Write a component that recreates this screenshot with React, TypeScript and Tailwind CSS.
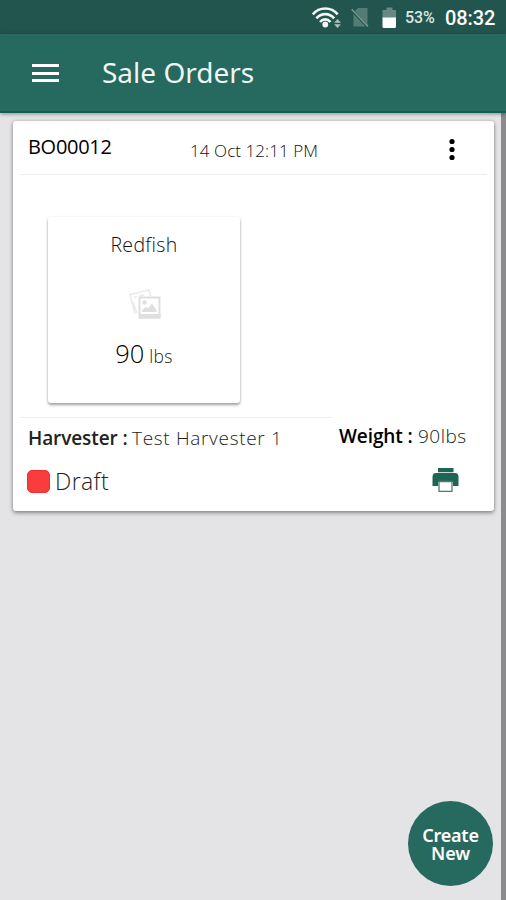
import React from "react";

function StatusBar() {
  return (
    <div className="flex h-[34px] items-center bg-[#22554e] pl-[311px] pt-px font-['Roboto',sans-serif] text-white">
      <svg className="h-6 w-[30px] shrink-0" viewBox="0 0 30 24" fill="none" stroke="#f1f7f5" strokeWidth="2.600">
        <path d="M1.800 8.300C8.500 .5 20 .5 26.700 8.300" />
        <path d="M5.400 12.300C10 6.700 18.500 6.700 23.100 12.300" />
        <path d="M9 16C12 12.500 16.500 12.500 19.500 16" />
        <circle cx="14.300" cy="18.500" r="2.900" fill="#f1f7f5" stroke="none" />
        <path d="M24.500 16.200l2-2.200 2 2.200zM24.500 18.800h4l-2 2.300z" fill="#a9c0bb" stroke="#a9c0bb" strokeWidth="1.300" />
      </svg>
      <svg className="ml-[10px] h-6 w-[18px] shrink-0" viewBox="0 0 18 24">
        <path d="M7 2h9.500v17L4 5zM2.500 8l12 12.500h-12z" fill="#547b74" />
        <path d="M.7 3.200L17 20.500" stroke="#7b9892" strokeWidth="1.500" />
      </svg>
      <svg className="ml-[13px] h-6 w-[15px] shrink-0" viewBox="0 0 15 24">
        <path d="M4.500 1.500h6V4H14v8H.5V4h4z" fill="#688981" />
        <path d="M.5 11.500H14v9q0 1.500-1.500 1.500H2Q.5 22 .5 20.500z" fill="#fff" />
      </svg>
      <span className="ml-[8px] mt-px w-[31px] whitespace-nowrap text-[16px] font-medium tracking-[-0.1px] text-[#dce7e4]">53%</span>
      <span className="ml-[9px] mt-px whitespace-nowrap text-[20px] font-medium tracking-[-0.1px]">08:32</span>
    </div>
  );
}

function Header() {
  return (
    <header className="relative z-10 flex h-[79px] items-center border-b-2 border-[#12604f] bg-[#26695e] pl-8 shadow-[0_1px_4px_rgba(0,0,0,0.4)]">
      <div className="flex w-[27px] flex-col gap-[4px]">
        <span className="h-[3px] bg-white" />
        <span className="mt-px h-[3px] bg-white" />
        <span className="h-[3px] bg-white" />
      </div>
      <h1 className="mb-[2px] ml-[43px] whitespace-nowrap font-['Noto_Sans',sans-serif] text-[28px] leading-8 text-[#eef5f3]">Sale Orders</h1>
    </header>
  );
}

function PicturesIcon() {
  return (
    <svg className="h-[34px] w-[34px]" viewBox="0 0 34 34" fill="none">
      <path d="M8 26L3 6.500 22 2l1.500 6M6 14l4 11" stroke="#eaeaea" strokeWidth="1.500" />
      <path d="M7 10l3-2M12 8l5-1" stroke="#ededed" strokeWidth="2" />
      <rect x="12.500" y="9.500" width="20" height="20" stroke="#dfdfdf" strokeWidth="2" fill="#fff" />
      <path d="M12 26h21.500v4.500H12z" fill="#dfdfdf" />
      <circle cx="17.500" cy="14.500" r="2.200" fill="#dfdfdf" />
      <path d="M15 24v-2l4-3 2.500 1 3.500-4.500 4.500 6.500v2z" fill="#dfdfdf" />
    </svg>
  );
}

function ProductTile() {
  return (
    <div className="ml-[35px] mt-[43px] flex h-[186px] w-[192px] flex-col items-center rounded-[3px] bg-white shadow-[0_2px_3px_rgba(0,0,0,0.36),0_0_3px_rgba(0,0,0,0.06)]">
      <div className="mt-[14px] text-[19.500px] leading-[28px] tracking-[0.35px] text-[#111]">Redfish</div>
      <div className="mt-[29px] h-[34px]"><PicturesIcon /></div>
      <div className="mt-[13px] flex h-[36px] items-baseline gap-[5px] leading-9 text-black">
        <span className="text-[25.500px]">90</span>
        <span className="text-[17.500px] tracking-[0.3px] text-[#222]">lbs</span>
      </div>
    </div>
  );
}

export default function App() {
  return (
    <div className="flex h-[900px] w-[506px] flex-col overflow-hidden bg-[#e4e4e6] font-['Open_Sans',sans-serif]">
      <StatusBar />
      <Header />
      <main className="flex grow flex-col border-r-[5px] border-[#8b8b8d] pl-[13px] pt-[8px]">
        <section className="h-[390px] w-[481px] rounded-[3px] bg-white shadow-[0_2px_4px_rgba(0,0,0,0.38),0_0_3px_rgba(0,0,0,0.18)]">
          <div className="mx-[7px] flex h-[54px] border-b border-[#eeeeee] pl-2 text-black">
            <span className="mt-[13px] w-[162px] text-[20px] font-medium leading-[26px] tracking-[-0.3px]">BO00012</span>
            <span className="mt-[17px] w-[257px] text-[17px] font-light leading-[26px] tracking-[0.08px] text-[#111]">14 Oct 12:11 PM</span>
            <svg className="mt-[16px] h-[24px] w-[10px]" viewBox="0 0 10 24"><circle cx="5" cy="4.500" r="2.600" /><circle cx="5" cy="12.500" r="2.600" /><circle cx="5" cy="20.500" r="2.600" /></svg>
          </div>
          <div className="-mt-px font-light"><ProductTile /></div>
          <div className="ml-[7px] mt-[14px] flex text-[19px] leading-[26px] text-[#222]">
            <div className="flex w-[312px] gap-[5px] whitespace-nowrap border-t border-[#eeeeee] pl-2 pt-[7px]">
              <b className="w-[99px] font-semibold tracking-[-0.1px] text-[#222]">Harvester :</b>
              <span className="font-light tracking-[0.68px]">Test Harvester 1</span>
            </div>
            <div className="ml-[7px] flex gap-[5px] whitespace-nowrap pt-[6px]">
              <b className="w-[74px] font-semibold tracking-[-0.1px] text-black">Weight :</b>
              <span className="font-light tracking-[0.5px]">90lbs</span>
            </div>
          </div>
          <div className="ml-[14px] mt-[13px] flex h-[34px] items-center">
            <span className="size-[23px] rounded-[5px] border border-[#ee3030] bg-[#f93d3d]" />
            <span className="ml-[5px] w-[377px] text-[23px] font-light leading-[34px] tracking-[0.4px] text-[#222]">Draft</span>
            <svg className="mb-[2px] h-[26px] w-[27px]" viewBox="0 0 27 26" fill="#1d6555">
              <path d="M6 1h15.500v4.200H6zM4 6h19q3.500 0 3.500 4v9H21v-4H6v4H.5v-9q0-4 3.500-4z" />
              <path d="M7 14.500h13v9.800H7z" fill="#fff" stroke="#4d7c71" strokeWidth="1.300" />
            </svg>
          </div>
        </section>
        <button className="mb-[14px] mr-2 mt-auto size-[85px] self-end rounded-full bg-[#26695e] px-2 text-center font-['Noto_Sans',sans-serif] text-[18px] font-semibold leading-[18px] tracking-[-0.2px] text-white">
          Create<br />New
        </button>
      </main>
    </div>
  );
}
